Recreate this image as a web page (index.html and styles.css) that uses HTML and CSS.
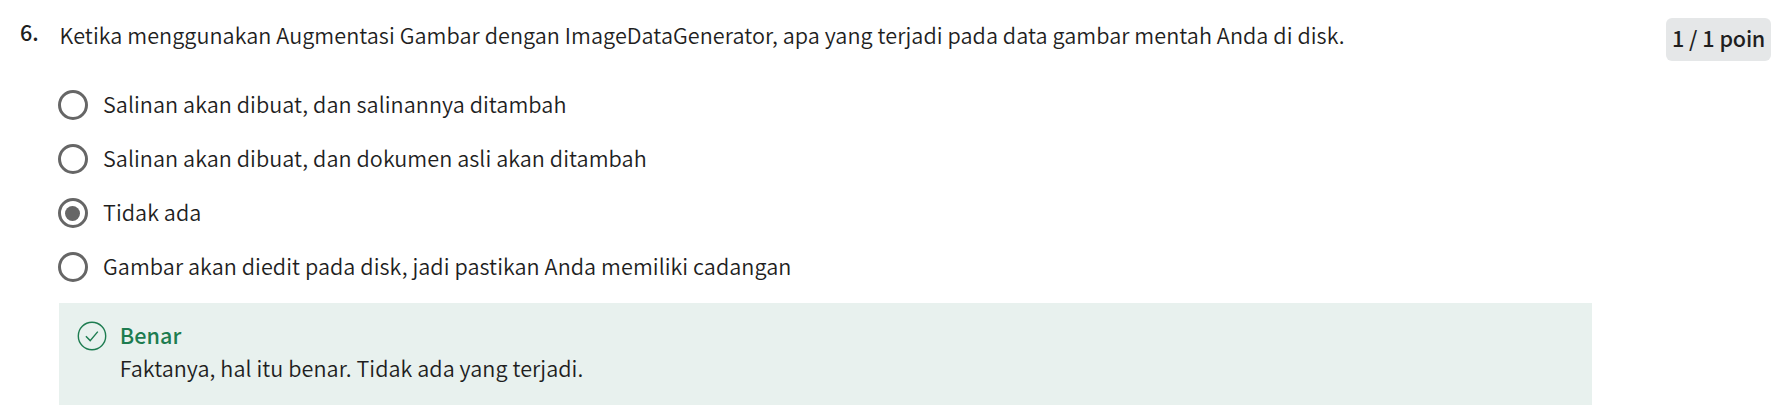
FILE: index.html
```html
<!DOCTYPE html>
<html lang="id">
<head>
<meta charset="utf-8">
<title>Kuis</title>
<link rel="stylesheet" href="styles.css">
</head>
<body>
<main class="question">
  <div class="number">6.</div>
  <div class="content">
    <p class="prompt"><span>Ketika menggunakan Augmentasi Gambar dengan ImageDataGenerator, apa yang terjadi pada data gambar mentah Anda di disk.</span></p>
    <ul class="options">
      <li class="option"><span class="radio"></span><span class="label">Salinan akan dibuat, dan salinannya ditambah</span></li>
      <li class="option"><span class="radio"></span><span class="label">Salinan akan dibuat, dan dokumen asli akan ditambah</span></li>
      <li class="option"><span class="radio checked"></span><span class="label">Tidak ada</span></li>
      <li class="option"><span class="radio"></span><span class="label">Gambar akan diedit pada disk, jadi pastikan Anda memiliki cadangan</span></li>
    </ul>
    <section class="feedback">
      <svg class="check" viewBox="0 0 30 30" fill="none" stroke="#1d7c50">
        <circle cx="15" cy="15" r="13.7" stroke-width="1.4"/>
        <path d="M8.9 15.2 13.2 19.6 20.8 10.6" stroke-width="1.4"/>
      </svg>
      <div class="feedback-text">
        <div class="verdict"><span>Benar</span></div>
        <div class="detail"><span>Faktanya, hal itu benar. Tidak ada yang terjadi.</span></div>
      </div>
    </section>
  </div>
  <div class="points"><span>1 / 1 poin</span></div>
</main>
</body>
</html>
```
FILE: styles.css
```css
* { box-sizing: border-box; }
body {
  margin: 0;
  background: #fff;
  color: #1f1f1f;
  font-family: "Noto Sans CJK SC", "Noto Sans", sans-serif;
  font-size: 21.6px;
  font-weight: 350;
  line-height: 32px;
  letter-spacing: 0.052px;
}
.question {
  display: flex;
  align-items: flex-start;
  height: 418px;
  padding: 18px 7px 0 20px;
}
.number { width: 38px; flex: none; font-weight: 500; line-height: 28px; }
.content { width: 1534px; flex: none; padding-top: 1px; }
.prompt { margin: 0 0 0 1.5px; white-space: nowrap; }
.options { list-style: none; margin: 27px 0 0; padding: 0; }
.option { display: flex; align-items: center; height: 54px; gap: 15.5px; white-space: nowrap; }
.label { padding-bottom: 2px; }
.radio {
  width: 30px;
  height: 30px;
  flex: none;
  border: 3px solid #666;
  border-radius: 50%;
  display: grid;
  place-items: center;
  margin-left: -0.5px;
}
.checked::after { content: ""; width: 15px; height: 15px; border-radius: 50%; background: #666; }
.feedback {
  display: flex;
  gap: 12.7px;
  height: 102px;
  margin: 9px 0 0 1px;
  padding: 16px 18px;
  background: #e8f1ee;
}
.check { width: 30px; height: 30px; flex: none; margin-top: 2px; }
.verdict { color: #1d7c50; font-weight: 500; height: 33px; }
.points {
  margin-left: auto;
  width: 105px;
  height: 43px;
  line-height: 40px;
  text-align: center;
  border-radius: 6px;
  background: #e5e7e8;
  font-weight: 500;
  letter-spacing: -0.25px;
  word-spacing: 0.5px;
  white-space: nowrap;
}
```
